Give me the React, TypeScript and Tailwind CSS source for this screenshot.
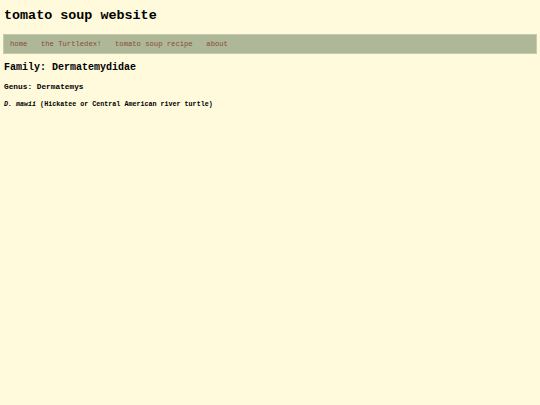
export default function App() {
  return (
    <div className="min-h-[405px] w-full bg-[#fffadc] text-black font-['Liberation_Mono',monospace] pt-[7px] px-[3px]">
      <h1 className="text-[13.4px] font-bold leading-[18px] pl-[1px]">tomato soup website</h1>
      <nav className="mt-[9px] h-[20px] bg-[#aeb798] border border-[#c4ccae] flex items-center pl-[6px] gap-[13.7px] text-[7.2px] text-[#8b4a3a]">
        <span>home</span>
        <span>the Turtledex!</span>
        <span>tomato soup recipe</span>
        <span>about</span>
      </nav>
      <h2 className="mt-[8px] text-[10px] font-bold leading-[12px] pl-[1px]">Family: Dermatemydidae</h2>
      <h3 className="mt-[8px] text-[7.8px] font-bold leading-[10px] pl-[1px]">Genus: Dermatemys</h3>
      <p className="mt-[8px] text-[6.7px] font-bold leading-[9px] pl-[1px]"><i>D. mawii</i> (Hickatee or Central American river turtle)</p>
    </div>
  );
}
